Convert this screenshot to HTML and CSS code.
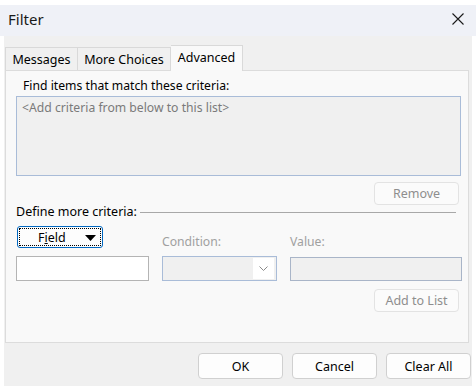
FILE: index.html
```html
<!DOCTYPE html>
<html>
<head>
<meta charset="utf-8">
<link rel="stylesheet" href="styles.css">
</head>
<body>
<div class="titlebar">
  <span class="title">Filter</span>
  <svg class="close" width="12" height="12" viewBox="0 0 12 12"><path d="M0.5 0.5 L11.5 11.5 M11.5 0.5 L0.5 11.5" stroke="#1a1a1a" stroke-width="1.1" fill="none"/></svg>
</div>
<div class="window">
  <div class="tabs">
    <div class="tab tab-messages">Messages</div>
    <div class="tab tab-more">More Choices</div>
    <div class="tab tab-active">Advanced</div>
  </div>
  <div class="panel">
    <div class="find-label">Find items that match these criteria:</div>
    <div class="criteria-list">&lt;Add criteria from below to this list&gt;</div>
    <div class="btn-row"><div class="btn btn-disabled">Remove</div></div>
    <div class="define-row">
      <span class="define-label">Define more criteria:</span>
      <span class="define-line"></span>
    </div>
    <div class="fields">
      <div class="cell">
        <div class="field-btn"><div class="field-focus"><span class="field-text">F<u>i</u>eld</span><svg class="tri" width="11" height="6" viewBox="0 0 11 6"><path d="M0 0 H11 L5.5 6 Z" fill="#000"/></svg></div></div>
      </div>
      <div class="cell"><span class="dlabel">Condition:</span></div>
      <div class="cell"><span class="dlabel">Value:</span></div>
      <div class="input-white"></div>
      <div class="combo"><div class="combo-btn"><svg width="9" height="5" viewBox="0 0 9 5"><path d="M0.5 0.5 L4.5 4.5 L8.5 0.5" stroke="#8a8a8a" stroke-width="1" fill="none"/></svg></div></div>
      <div class="input-disabled"></div>
    </div>
    <div class="btn-row add-row"><div class="btn btn-disabled">Add to List</div></div>
  </div>
  <div class="footer">
    <div class="btn btn-footer">OK</div>
    <div class="btn btn-footer">Cancel</div>
    <div class="btn btn-footer">Clear All</div>
  </div>
</div>
</body>
</html>
```
FILE: styles.css
```css
html, body {
  margin: 0;
  padding: 0;
  background: #ffffff;
}
body {
  width: 476px;
  height: 390px;
  overflow: hidden;
  font-family: "Noto Sans", "Open Sans", sans-serif;
  font-size: 12px;
  color: #000;
}
.titlebar {
  margin-top: 5px;
  height: 31px;
  background: #eff1f7;
  display: flex;
  align-items: center;
  justify-content: space-between;
  padding: 0 12px 0 8px;
}
.title {
  font-size: 15px;
  color: #1a1a1a;
  line-height: 20px;
  margin-top: -4px;
}
.close {
  display: block;
  margin-top: -4px;
}
.window {
  margin: 0 4px;
  height: 350px;
  background: #f0f0f0;
  padding-top: 9px;
  box-sizing: border-box;
}
.tabs {
  display: flex;
  align-items: flex-end;
  margin-left: 1px;
  height: 25px;
  position: relative;
  z-index: 1;
}
.tab {
  box-sizing: border-box;
  height: 23px;
  border: 1px solid #d9d9d9;
  border-bottom: none;
  background: #f0f0f0;
  display: flex;
  align-items: center;
  justify-content: center;
  font-size: 12.5px;
  color: #000;
}
.tab-messages { width: 73px; }
.tab-more { width: 93px; border-left: none; }
.tab-active {
  width: 72px;
  height: 26px;
  margin-bottom: -1px;
  background: #f9f9f9;
  border-left: none;
  padding-bottom: 3px;
}
.panel {
  width: 464px;
  height: 273px;
  box-sizing: border-box;
  margin-left: 1px;
  border: 1px solid #dcdcdc;
  background: #f9f9f9;
  padding: 6px 7px 0 10px;
  display: flex;
  flex-direction: column;
}
.find-label {
  padding-left: 7px;
  line-height: 17px;
  height: 19px;
  font-size: 12.2px;
}
.criteria-list {
  height: 80px;
  box-sizing: border-box;
  border: 1px solid #a9bcd8;
  background: #f0f0f0;
  color: #7a7a7a;
  padding: 2px 5px;
  line-height: 17px;
  font-size: 12.2px;
}
.btn-row {
  display: flex;
  justify-content: flex-end;
  padding-right: 2px;
  margin-top: 6px;
}
.btn {
  box-sizing: border-box;
  width: 85px;
  height: 23px;
  border: 1px solid #e3e3e3;
  border-radius: 4px;
  background: #fbfbfb;
  display: flex;
  align-items: center;
  justify-content: center;
  font-size: 12.5px;
}
.btn-disabled {
  color: #8e8e8e;
}
.define-row {
  display: flex;
  align-items: center;
  margin-top: -1px;
  height: 16px;
}
.define-label {
  line-height: 16px;
  font-size: 12.5px;
}
.define-line {
  flex: 1;
  height: 1px;
  background: #a8a8a8;
  margin: 0 5px 0 3px;
}
.fields {
  display: grid;
  grid-template-columns: 133px 115px 172px;
  grid-template-rows: 23px 25px;
  column-gap: 13px;
  row-gap: 7px;
  margin-top: 6px;
}
.cell {
  display: flex;
  align-items: flex-end;
}
.dlabel {
  color: #a0a0a0;
  line-height: 14px;
  font-size: 12.2px;
}
.field-btn {
  align-self: flex-start;
  margin-left: 1px;
  width: 86px;
  height: 22px;
  box-sizing: border-box;
  border: 1px solid #0067c0;
  border-radius: 3px;
  background: #fdfdfd;
  padding: 1px;
}
.field-focus {
  height: 100%;
  box-sizing: border-box;
  border: 1px dotted #000;
  display: flex;
  align-items: center;
  padding-left: 18px;
  padding-right: 4px;
}
.field-text {
  font-size: 12.5px;
  flex: 1;
}
.tri {
  display: block;
  margin-top: 1px;
}
.input-white {
  box-sizing: border-box;
  height: 25px;
  border: 1px solid #b4b4b4;
  background: #ffffff;
}
.combo {
  box-sizing: border-box;
  height: 25px;
  border: 1px solid #a9bcd8;
  background: #f0f0f0;
  display: flex;
  justify-content: flex-end;
  padding: 1px 2px 1px 0;
}
.combo-btn {
  width: 21px;
  background: #ffffff;
  display: flex;
  align-items: center;
  justify-content: center;
}
.input-disabled {
  box-sizing: border-box;
  height: 24px;
  margin-top: 1px;
  border: 1px solid #a9b5c8;
  background: #f0f0f0;
}
.add-row {
  margin-top: 8px;
}
.footer {
  display: flex;
  justify-content: flex-end;
  column-gap: 9px;
  margin-top: 10px;
  padding-right: 1px;
}
.btn-footer {
  height: 26px;
  border-color: #d0d0d0;
  background: #fdfdfd;
}
```
